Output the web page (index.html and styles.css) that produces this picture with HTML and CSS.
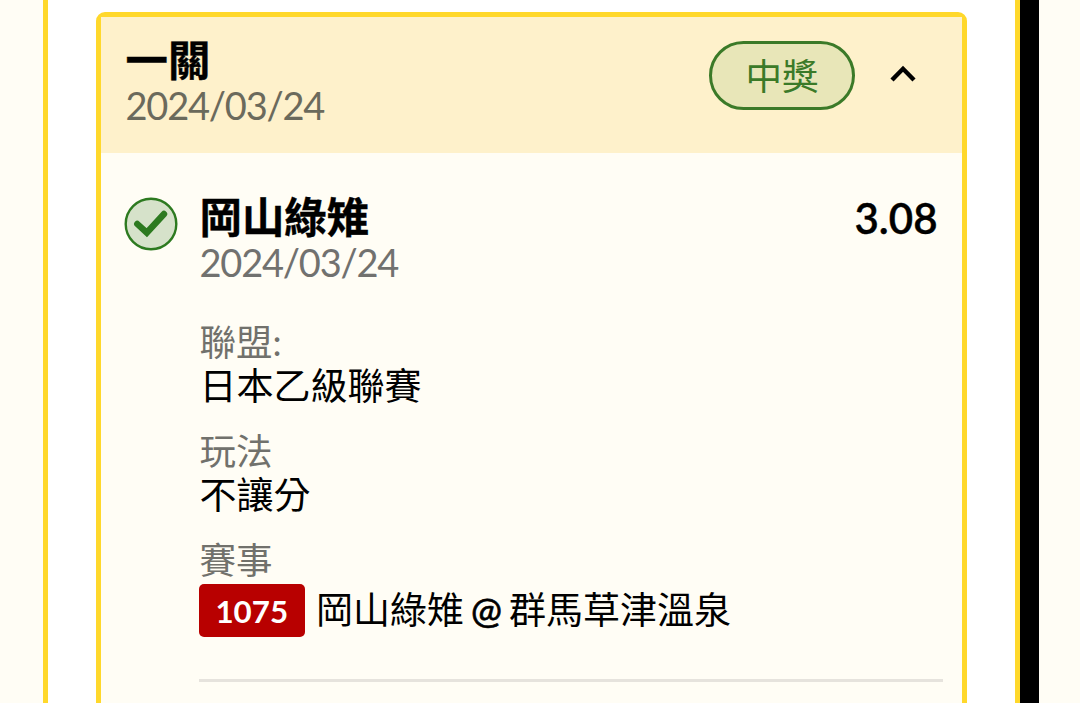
FILE: index.html
```html
<!DOCTYPE html>
<html lang="zh-Hant">
<head>
  <meta charset="UTF-8">
  <title>一關</title>
  <link rel="stylesheet" href="styles.css">
</head>
<body>
<div class="page">
  <div class="panel">
    <div class="card">
      <div class="card-header">
        <div class="heading">
          <div class="title">一關</div>
          <div class="date">2024/03/24</div>
        </div>
        <div class="status">中獎</div>
        <svg class="chevron" width="28" height="20" viewBox="0 0 28 20">
          <path d="M3 16 L14 4.800 L25 16" fill="none" stroke="#000" stroke-width="4.400"/>
        </svg>
      </div>
      <div class="card-body">
        <svg class="check" width="54" height="54" viewBox="0 0 54 54">
          <circle cx="27" cy="27" r="25.300" fill="#d6e2ca" stroke="#2d7a20" stroke-width="2.400"/>
          <path d="M13.300 27 L22.800 35.700 L40 17" fill="none" stroke="#2d7a20" stroke-width="6.400" stroke-linecap="round"/>
        </svg>
        <div class="bet">
          <div class="bet-top">
            <div class="heading">
              <div class="title">岡山綠雉</div>
              <div class="date">2024/03/24</div>
            </div>
            <div class="odds">3.08</div>
          </div>
          <div class="field">
            <div class="label">聯盟:</div>
            <div class="value">日本乙級聯賽</div>
          </div>
          <div class="field">
            <div class="label">玩法</div>
            <div class="value">不讓分</div>
          </div>
          <div class="field">
            <div class="label">賽事</div>
            <div class="match">
              <span class="code">1075</span>
              <span class="teams">岡山綠雉 <span class="at">@</span> 群馬草津溫泉</span>
            </div>
          </div>
          <div class="line"></div>
        </div>
      </div>
    </div>
  </div>
  <div class="bar"></div>
</div>
</body>
</html>
```

FILE: styles.css
```css
* { box-sizing: border-box; }

body {
    margin: 0;
    height: 703px;
    overflow: hidden;
    background-color: #fffdf5;
    color: #000;
    font-family: Lato, "Noto Sans CJK TC", sans-serif;
    font-size: 37px;
}

.page {
    display: flex;
    height: 703px;
    padding-left: 42.5px;
}

.panel {
    width: 977.5px;
    padding: 12px 48px 0;
    background: #fff;
    border: solid #ffd82b;
    border-width: 0 5px;
}

.bar {
    width: 18.5px;
    background: #000;
}

.card {
    width: 871px;
    height: 720px;
    border: 5px solid #ffd82b;
    border-radius: 9px;
    background: #fffdf5;
}

.card-header {
    display: flex;
    height: 136px;
    padding: 24px 45px 0 25px;
    background: #fef1cb;
}

.heading { flex: 1; }

.title {
    font-size: 42.4px;
    font-weight: bold;
    line-height: 42px;
    -webkit-text-stroke: 0.4px #000;
}

.card-header .title {
    line-height: 38px;
    margin-bottom: 4px;
}

.date {
    color: #6b6a5c;
    font-size: 38px;
    letter-spacing: -1.2px;
    line-height: 44px;
}

.bet .date {
    padding-top: 2px;
    color: #71716f;
}

.status {
    width: 146px;
    height: 69px;
    border: 3px solid #3b7a28;
    border-radius: 35px;
    background: #e8e6b8;
    color: #3b7a28;
    font-size: 36.5px;
    line-height: 64px;
    text-align: center;
    text-indent: 1px;
}

.chevron {
    margin: 23px 0 0 34px;
}

.card-body {
    display: flex;
    padding: 43px 19px 0 23px;
}

.check {
    flex: none;
    margin: 1px 22px 0 0;
}

.bet {
    flex: 1;
    margin-left: -1px;
}

.bet-top {
    display: flex;
    margin-bottom: 36px;
    padding-left: 1px;
}

.odds {
    padding-right: 5px;
    font-size: 42px;
    font-weight: 600;
    line-height: 44px;
    -webkit-text-stroke: 0.4px #000;
}

.field { margin-bottom: 21px; }

.label {
    padding-left: 1px;
    color: #71716c;
    font-size: 36.5px;
    line-height: 44px;
}

.value {
    padding-left: 1px;
    line-height: 44px;
}

.match {
    display: flex;
    align-items: center;
    padding-top: 1px;
}

.code {
    width: 106.5px;
    height: 53px;
    margin-right: 11px;
    border-radius: 5px;
    background: #b80000;
    color: #fff;
    font-size: 31.3px;
    font-weight: bold;
    line-height: 54px;
    text-align: center;
}

.teams {
    line-height: 54px;
    word-spacing: -1.5px;
}

.at {
    margin: 0 -1px;
    -webkit-text-stroke: 0.7px #000;
}

.line {
    margin-top: 41.5px;
    height: 3px;
    background: #e6e3dd;
}
```
